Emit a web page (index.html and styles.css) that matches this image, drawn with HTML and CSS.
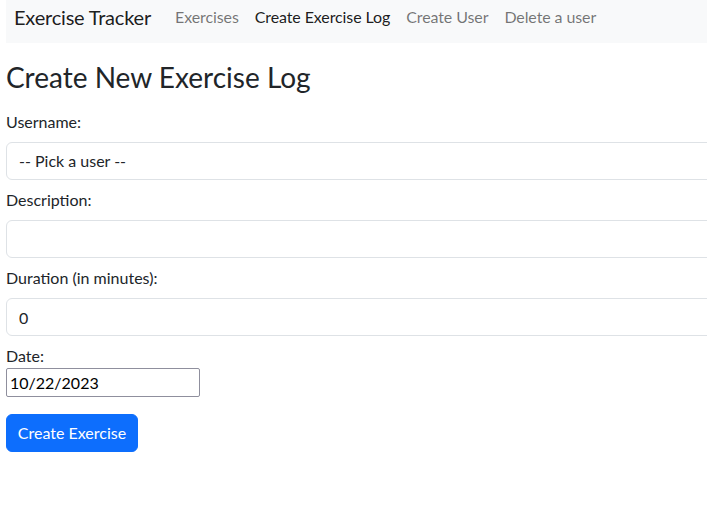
FILE: index.html
```html
<!DOCTYPE html>
<html lang="en">
<head>
<meta charset="utf-8">
<title>Exercise Tracker</title>
<link rel="stylesheet" href="styles.css">
</head>
<body>
<div class="page">
  <nav class="navbar">
    <a class="brand" href="#">Exercise Tracker</a>
    <ul class="nav">
      <li><a class="nav-link" href="#">Exercises</a></li>
      <li><a class="nav-link active" href="#">Create Exercise Log</a></li>
      <li><a class="nav-link" href="#">Create User</a></li>
      <li><a class="nav-link" href="#">Delete a user</a></li>
    </ul>
  </nav>
  <main class="content">
    <h3 class="title">Create New Exercise Log</h3>
    <form class="form">
      <div class="group">
        <label class="label">Username: </label>
        <div class="control select">-- Pick a user --</div>
      </div>
      <div class="group">
        <label class="label">Description: </label>
        <input class="control" type="text" value="">
      </div>
      <div class="group">
        <label class="label">Duration (in minutes): </label>
        <input class="control" type="text" value="0">
      </div>
      <div class="group date-group">
        <label class="label">Date: </label>
        <input class="date-input" type="text" value="10/22/2023">
      </div>
      <button class="btn" type="button">Create Exercise</button>
    </form>
  </main>
</div>
</body>
</html>
```

FILE: styles.css
```css
html, body {
  margin: 0;
  padding: 0;
  overflow: hidden;
  background: #fff;
}
body {
  font-family: Lato, "Noto Sans", sans-serif;
  font-size: 16px;
  color: #212529;
}
.page {
  width: 1100px;
  padding-left: 6px;
}
.navbar {
  display: flex;
  align-items: flex-start;
  height: 43px;
  background: #f8f9fa;
  padding-left: 8px;
  box-sizing: border-box;
}
.brand {
  font-size: 20px;
  line-height: 30px;
  padding-top: 2px;
  letter-spacing: -0.2px;
  color: rgba(0, 0, 0, 0.9);
  text-decoration: none;
  margin-right: 16px;
}
.nav {
  display: flex;
  list-style: none;
  margin: 0;
  padding: 0;
}
.nav-link {
  display: block;
  padding: 5px 8px 0;
  line-height: 24px;
  letter-spacing: -0.1px;
  color: rgba(0, 0, 0, 0.55);
  text-decoration: none;
}
.nav-link.active {
  color: rgba(0, 0, 0, 0.9);
}
.title {
  font-size: 28px;
  font-weight: 400;
  line-height: 34px;
  margin: 17px 0 16px;
}
.form {
  display: flex;
  flex-direction: column;
  align-items: flex-start;
}
.group {
  align-self: stretch;
  margin-bottom: 8px;
}
.label {
  display: block;
  line-height: 24px;
  margin-bottom: 8px;
}
.control {
  display: block;
  width: 100%;
  height: 38px;
  box-sizing: border-box;
  padding: 6px 12px;
  font: inherit;
  line-height: 24px;
  color: #212529;
  background: #fff;
  border: 1px solid #dee2e6;
  border-radius: 6px;
  outline: none;
}
.date-group .label {
  margin-bottom: 0;
}
.date-input {
  display: block;
  width: 194px;
  height: 29px;
  box-sizing: border-box;
  padding: 0 3px;
  font: inherit;
  color: #000;
  border: 1px solid #8f8f9d;
  border-radius: 2px;
  margin-bottom: 9px;
}
.btn {
  width: 132px;
  height: 38px;
  padding: 6px 0;
  font: inherit;
  line-height: 24px;
  white-space: nowrap;
  color: #fff;
  background: #0d6efd;
  border: 1px solid #0d6efd;
  border-radius: 6px;
}
```
